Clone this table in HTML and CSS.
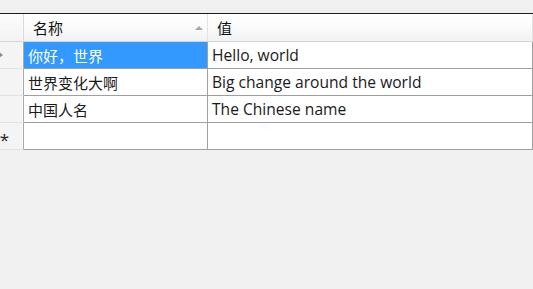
FILE: index.html
```html
<!DOCTYPE html>
<html lang="zh-CN">
<head>
  <meta charset="UTF-8">
  <title>数据表</title>
  <link rel="stylesheet" href="styles.css">
</head>
<body>
  <div class="grid-view">
    <div class="grid">
      <div class="row-head corner"></div>
      <div class="col-head">名称<span class="sort-up"></span></div>
      <div class="col-head">值</div>

      <div class="row-head"><span class="current"></span></div>
      <div class="cell selected">你好，世界</div>
      <div class="cell value">Hello, world</div>

      <div class="row-head"></div>
      <div class="cell">世界变化大啊</div>
      <div class="cell value">Big change around the world</div>

      <div class="row-head"></div>
      <div class="cell">中国人名</div>
      <div class="cell value">The Chinese name</div>

      <div class="row-head new-row">*</div>
      <div class="cell"></div>
      <div class="cell"></div>
    </div>
  </div>
</body>
</html>
```

FILE: styles.css
```css
body {
  margin: 0;
  padding: 0;
  background-color: #f0f0f0;
  font-family: "Open Sans", "Noto Sans CJK SC", sans-serif;
  font-size: 15px;
  color: #1a1a1a;
  overflow: hidden;
}

.grid-view {
  margin-top: 13px;
  border-top: 1px solid #1c1c1c;
  overflow: hidden;
}

/* row header is scrolled partly out of view on the left */
.grid {
  display: grid;
  grid-template-columns: 40px 184px 1fr;
  grid-template-rows: 28px repeat(4, 27px);
  margin-left: -16px;
}

.col-head {
  position: relative;
  display: flex;
  align-items: center;
  padding-left: 9px;
  background: linear-gradient(#ffffff, #fbfbfb 50%, #f1f2f4);
  border-bottom: 1px solid #d5d5d5;
  border-right: 1px solid #e3e3e3;
  color: #111;
}

.sort-up {
  position: absolute;
  right: 4px;
  top: 12px;
  width: 0;
  height: 0;
  border-left: 4px solid transparent;
  border-right: 4px solid transparent;
  border-bottom: 4px solid #a7a7a7;
}

.row-head {
  display: flex;
  align-items: center;
  justify-content: flex-end;
  padding-right: 20px;
  background-color: #f4f4f4;
  border-right: 1px solid #a9a9a9;
  border-bottom: 1px solid #e2e2e2;
  box-shadow: inset -1px 0 0 #fbfbfb;
  color: #222;
}

.row-head.corner {
  background: linear-gradient(#fdfdfd, #f3f3f3);
  border-bottom: 1px solid #d5d5d5;
  border-right: 1px solid #d9d9d9;
}

/* current row marker, mostly scrolled away */
.row-head .current {
  width: 0;
  height: 0;
  border-top: 3px solid transparent;
  border-bottom: 3px solid transparent;
  border-left: 4px solid #8a8a8a;
}

.row-head.new-row {
  font-size: 17px;
  padding-right: 14px;
  padding-top: 6px;
}

.cell {
  display: flex;
  align-items: center;
  padding-left: 4px;
  background-color: #ffffff;
  border-right: 1px solid #a0a0a0;
  border-bottom: 1px solid #a0a0a0;
  white-space: nowrap;
}

.cell.value {
  font-size: 15.6px;
}

.cell.selected {
  background-color: #3399ff;
  color: #ffffff;
}
```
